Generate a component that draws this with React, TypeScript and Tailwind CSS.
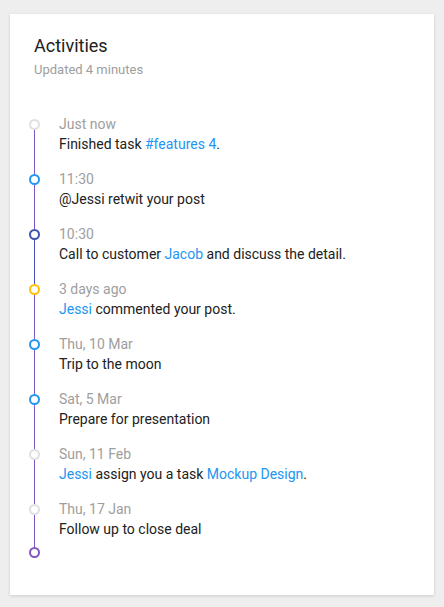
import React from "react";

type Activity = {
  time: string;
  dot: string;
  line: string;
  body: React.ReactNode;
};

const Link = ({ children }: { children: React.ReactNode }) => (
  <span className="text-[#2196f3]">{children}</span>
);

const activities: Activity[] = [
  {
    time: "Just now",
    dot: "border-[#e0e0e0]",
    line: "bg-[#7e57c2]",
    body: (
      <>
        Finished task <Link>#features 4</Link>.
      </>
    ),
  },
  {
    time: "11:30",
    dot: "border-[#2196f3]",
    line: "bg-[#7e57c2]",
    body: <>@Jessi retwit your post</>,
  },
  {
    time: "10:30",
    dot: "border-[#3f51b5]",
    line: "bg-[#3f51b5]",
    body: (
      <>
        Call to customer <Link>Jacob</Link> and discuss the detail.
      </>
    ),
  },
  {
    time: "3 days ago",
    dot: "border-[#ffc107]",
    line: "bg-[#7e57c2]",
    body: (
      <>
        <Link>Jessi</Link> commented your post.
      </>
    ),
  },
  {
    time: "Thu, 10 Mar",
    dot: "border-[#2196f3]",
    line: "bg-[#7e57c2]",
    body: <>Trip to the moon</>,
  },
  {
    time: "Sat, 5 Mar",
    dot: "border-[#2196f3]",
    line: "bg-[#7e57c2]",
    body: <>Prepare for presentation</>,
  },
  {
    time: "Sun, 11 Feb",
    dot: "border-[#e0e0e0]",
    line: "bg-[#7e57c2]",
    body: (
      <>
        <Link>Jessi</Link> assign you a task <Link>Mockup Design</Link>.
      </>
    ),
  },
  {
    time: "Thu, 17 Jan",
    dot: "border-[#e0e0e0]",
    line: "bg-[#7e57c2]",
    body: <>Follow up to close deal</>,
  },
];

export default function App() {
  return (
    <div
      className="min-h-[607px] bg-[#eeeeee] px-[10px] pt-[14px] pb-[12px]"
      style={{ fontFamily: "Roboto, 'Liberation Sans', sans-serif" }}
    >
      <div className="bg-white pl-[19px] pr-6 pt-5 pb-[37px] shadow-[0_1px_3px_rgba(0,0,0,0.14)]">
        <div className="pl-[5px]">
          <h2 className="text-[18px] leading-6 text-[#212121]">Activities</h2>
          <p className="mt-1 text-[13px] leading-4 text-[#9e9e9e]">Updated 4 minutes</p>
        </div>

        <div className="mt-9">
          {activities.map((a, i) => (
            <div key={i} className="flex">
              <div className="flex w-[11px] flex-col items-center">
                <div className={`mt-[5px] h-[11px] w-[11px] shrink-0 rounded-full border-2 bg-white ${a.dot}`} />
                <div className={`-mb-[5px] w-px flex-1 ${a.line}`} />
              </div>
              <div
                className={`ml-[19px] text-[14px] leading-5 ${
                  i === activities.length - 1 ? "pb-2" : "pb-[15px]"
                }`}
              >
                <div className="text-[#9e9e9e]">{a.time}</div>
                <div className="text-[#212121]">{a.body}</div>
              </div>
            </div>
          ))}
          <div className="flex">
            <div className="h-[11px] w-[11px] rounded-full border-2 border-[#7e57c2] bg-white" />
          </div>
        </div>
      </div>
    </div>
  );
}
